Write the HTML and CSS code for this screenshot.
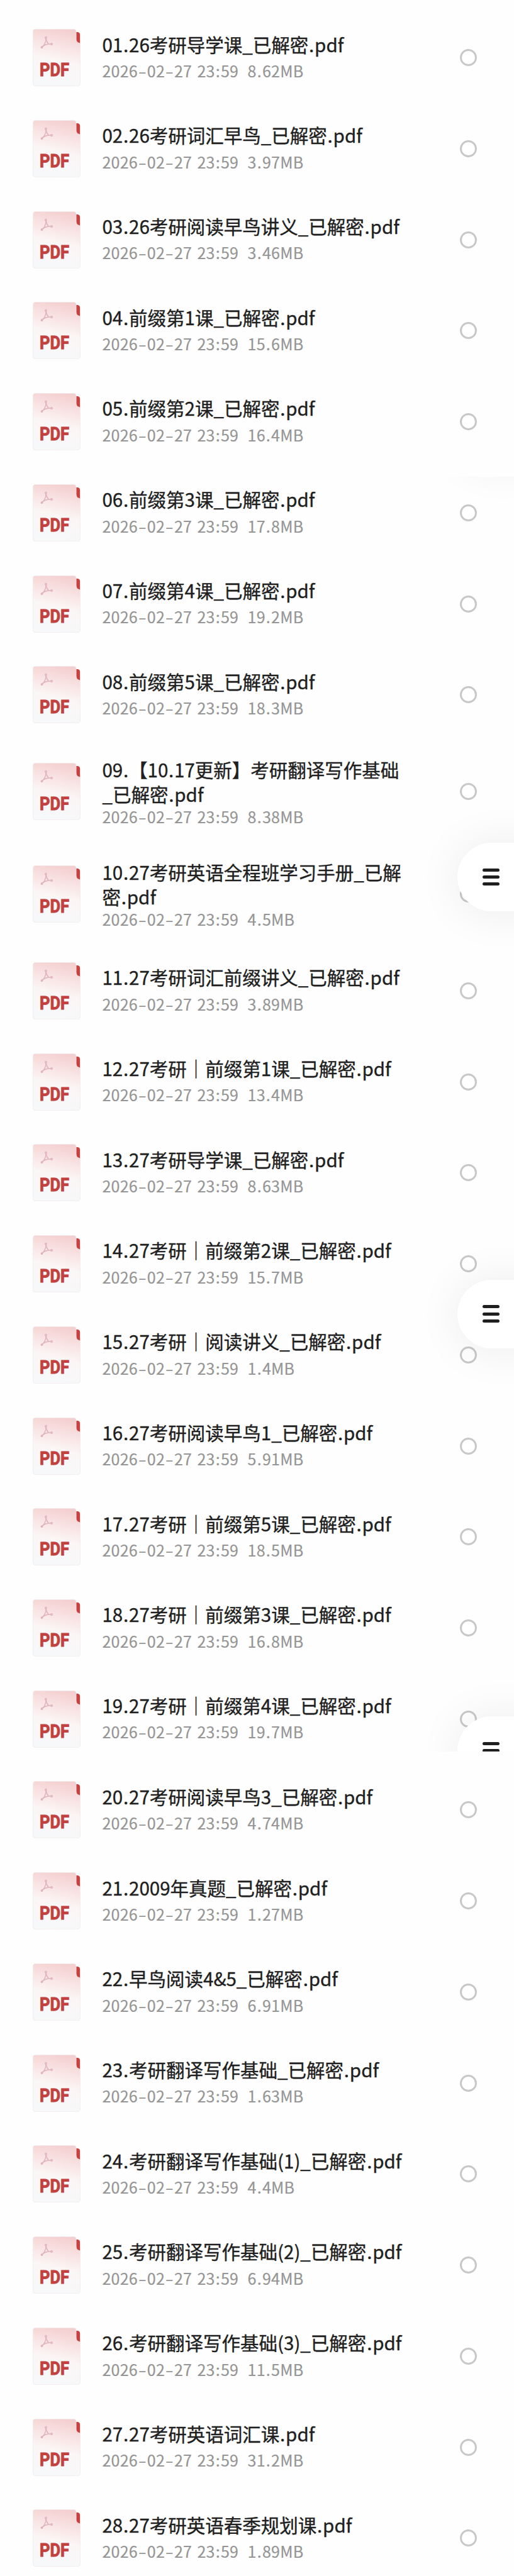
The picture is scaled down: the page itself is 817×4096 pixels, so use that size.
FILE: index.html
```html
<!DOCTYPE html>
<html lang="zh-CN">
<head>
    <meta charset="UTF-8">
    <meta name="viewport" content="width=device-width, initial-scale=1.0">
    <title>文件列表</title>
    <link rel="stylesheet" href="styles.css">
</head>
<body>
    <!-- shared file icon -->
    <svg class="defs" width="0" height="0">
        <defs>
            <linearGradient id="paper" x1="0.6" y1="0" x2="0.4" y2="1">
                <stop offset="0" stop-color="#f4cfd0"/>
                <stop offset="0.28" stop-color="#f9e3e3"/>
                <stop offset="0.55" stop-color="#fbf6f6"/>
                <stop offset="1" stop-color="#f6f8fa"/>
            </linearGradient>
            <symbol id="pdf" viewBox="0 0 100 120">
                <path d="M90 6.5h3.500a5.500 5.500 0 0 1 5.500 5.500v19h-4q-5-2-5-8z" fill="#c9403f"/>
                <path d="M6 .5h79.500q5.500 0 5.500 5.500v15q0 7 6 8.500 2.500.5 2.500 3V114q0 5.500-5.500 5.500H6Q.5 119.500.5 114V6Q.5.5 6 .5z" fill="url(#paper)" stroke="#f1e8ea" stroke-width="1"/>
                <g fill="none" stroke="#e0b4bf" stroke-width="2" stroke-linecap="round" stroke-linejoin="round">
                    <path d="M27.500 19c1 6-.500 9-2.500 12.500-1.500 2.500-3.500 5-6 7"/>
                    <path d="M27.500 19c.500 6 2.500 9 5 11.500"/>
                    <path d="M19 38.500c4-4.500 9-7 19-6.800"/>
                    <circle cx="27.500" cy="18" r="1.500"/>
                    <circle cx="19" cy="38.500" r="1.500"/>
                    <circle cx="39.500" cy="31.800" r="1.700"/>
                </g>
                <text x="14.500" y="99.300" textLength="62" lengthAdjust="spacingAndGlyphs" class="pdf-label">PDF</text>
            </symbol>
        </defs>
    </svg>

    <div class="page">
        <ul class="file-list" id="fileList"></ul>

        <div class="float float-tail"><div class="fab"></div></div>
        <div class="float float-first"><div class="fab"><span></span><span></span><span></span></div></div>
        <div class="float float-second"><div class="fab"><span></span><span></span><span></span></div></div>
        <div class="float float-cut"><div class="fab"><span></span><span></span><span></span></div></div>
    </div>

    <script>
        const files = [
            ['01.26考研导学课_已解密.pdf', '8.62MB'],
            ['02.26考研词汇早鸟_已解密.pdf', '3.97MB'],
            ['03.26考研阅读早鸟讲义_已解密.pdf', '3.46MB'],
            ['04.前缀第1课_已解密.pdf', '15.6MB'],
            ['05.前缀第2课_已解密.pdf', '16.4MB'],
            ['06.前缀第3课_已解密.pdf', '17.8MB'],
            ['07.前缀第4课_已解密.pdf', '19.2MB'],
            ['08.前缀第5课_已解密.pdf', '18.3MB'],
            ['09.【10.17更新】考研翻译写作基础\n_已解密.pdf', '8.38MB'],
            ['10.27考研英语全程班学习手册_已解\n密.pdf', '4.5MB'],
            ['11.27考研词汇前缀讲义_已解密.pdf', '3.89MB'],
            ['12.27考研｜前缀第1课_已解密.pdf', '13.4MB'],
            ['13.27考研导学课_已解密.pdf', '8.63MB'],
            ['14.27考研｜前缀第2课_已解密.pdf', '15.7MB'],
            ['15.27考研｜阅读讲义_已解密.pdf', '1.4MB'],
            ['16.27考研阅读早鸟1_已解密.pdf', '5.91MB'],
            ['17.27考研｜前缀第5课_已解密.pdf', '18.5MB'],
            ['18.27考研｜前缀第3课_已解密.pdf', '16.8MB'],
            ['19.27考研｜前缀第4课_已解密.pdf', '19.7MB'],
            ['20.27考研阅读早鸟3_已解密.pdf', '4.74MB'],
            ['21.2009年真题_已解密.pdf', '1.27MB'],
            ['22.早鸟阅读4&5_已解密.pdf', '6.91MB'],
            ['23.考研翻译写作基础_已解密.pdf', '1.63MB'],
            ['24.考研翻译写作基础(1)_已解密.pdf', '4.4MB'],
            ['25.考研翻译写作基础(2)_已解密.pdf', '6.94MB'],
            ['26.考研翻译写作基础(3)_已解密.pdf', '11.5MB'],
            ['27.27考研英语词汇课.pdf', '31.2MB'],
            ['28.27考研英语春季规划课.pdf', '1.89MB']
        ];

        // punctuation gets its own box so it can be spaced like the digits
        function spaced(text) {
            return text
                .replace(/&/g, '&amp;')
                .replace(/[.:]/g, '<span class="dot">$&</span>')
                .replace(/-/g, '<span class="dash">-</span>');
        }

        document.getElementById('fileList').innerHTML = files.map(([name, size]) => `
            <li class="file${name.includes('\n') ? ' file-tall' : ''}">
                <svg class="file-icon"><use href="#pdf"/></svg>
                <div class="file-info">
                    <div class="file-name">${spaced(name)}</div>
                    <div class="file-meta">${spaced('2026-02-27 23:59')}<span class="file-size">${spaced(size)}</span></div>
                </div>
                <span class="file-check"></span>
            </li>
        `).join('');
    </script>
</body>
</html>
```
FILE: styles.css
```css
* {
    box-sizing: border-box;
    margin: 0;
    padding: 0;
}

body {
    font-family: "Noto Sans CJK SC", sans-serif;
    background: #fefefe;
    color: #1f1f1f;
}

.defs {
    position: absolute;
}

.page {
    position: relative;
    height: 4096px;
    overflow: hidden;
    padding-top: 19.4px;
}

.file-list {
    list-style: none;
}

.file {
    display: flex;
    align-items: center;
    height: 144.72px;
    padding: 0 59px 0 52px;
}

.file-tall {
    height: 163px;
}

.file-icon {
    width: 76px;
    height: 91px;
    flex: none;
}

.pdf-label {
    font-family: Roboto, sans-serif;
    font-size: 38px;
    font-weight: 700;
    fill: #c2413f;
    stroke: #c2413f;
    stroke-width: 1.2px;
}

.file-info {
    flex: 1;
    align-self: flex-start;
    padding: 31.2px 0 0 34.5px;
}

.file-tall .file-info {
    padding-top: 27px;
}

.file-name {
    font-size: 29.5px;
    line-height: 38.8px;
    white-space: pre;
    -webkit-text-stroke: 0.4px #1f1f1f;
}

.file-meta {
    margin-top: 4.6px;
    font-size: 25px;
    line-height: 36px;
    letter-spacing: 0.2px;
    color: #959595;
    white-space: nowrap;
    word-spacing: 2.5px;
    -webkit-text-stroke: 0.2px #959595;
}

.file-tall .file-meta {
    margin-top: -1.6px;
}

.file-size {
    margin-left: 14.5px;
}

.dot {
    padding: 0 0.8px;
}

.file-meta .dot {
    padding: 0 1.1px;
}

.dash {
    display: inline-block;
    width: 15px;
    text-align: center;
    transform: scaleX(1.5);
}

.file-check {
    width: 27px;
    height: 27px;
    border: 3px solid #c8c8c8;
    border-radius: 50%;
    background: #fff;
}

/* floating menu button; each wrapper clips the shadow */
.float {
    position: absolute;
    right: 0;
    width: 220px;
    height: 300px;
    overflow: hidden;
}

.fab {
    display: flex;
    flex-direction: column;
    align-items: flex-start;
    justify-content: center;
    gap: 6.5px;
    width: 150px;
    height: 109px;
    margin: 95px 0 0 129.5px;
    padding-left: 40.5px;
    border-radius: 55px;
    background: #fff;
    box-shadow: 0 2px 70px rgba(0, 0, 0, 0.08);
}

.fab span {
    width: 27px;
    height: 4.9px;
    border-radius: 3px;
    background: #1f1f1f;
}

.float-tail {
    top: 758px;
    height: 100px;
}

.float-tail .fab {
    margin-top: -129px;
}

.float-first {
    top: 1245px;
}

.float-second {
    top: 1939.6px;
}

.float-cut {
    top: 2634px;
    height: 150.6px;
}
```
